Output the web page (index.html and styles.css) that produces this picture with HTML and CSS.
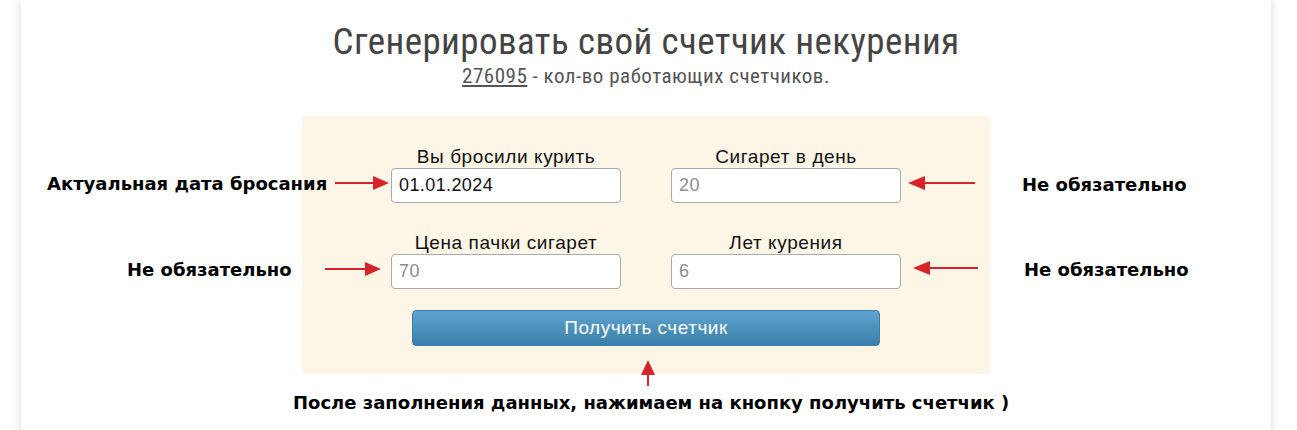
FILE: index.html
```html
<!DOCTYPE html>
<html lang="ru">
<head>
<meta charset="utf-8">
<title>Счетчик некурения</title>
<link rel="stylesheet" href="styles.css">
</head>
<body>
<div class="page">
  <h1 class="title">Сгенерировать свой счетчик некурения</h1>
  <p class="subtitle"><a class="count" href="#">276095</a> - кол-во работающих счетчиков.</p>
  <form class="gen-form">
    <div class="fields">
      <label class="field">
        <span class="field-label">Вы бросили курить</span>
        <input class="field-input" type="text" value="01.01.2024">
      </label>
      <label class="field">
        <span class="field-label">Сигарет в день</span>
        <input class="field-input" type="text" placeholder="20">
      </label>
      <label class="field">
        <span class="field-label">Цена пачки сигарет</span>
        <input class="field-input" type="text" placeholder="70">
      </label>
      <label class="field">
        <span class="field-label">Лет курения</span>
        <input class="field-input" type="text" placeholder="6">
      </label>
    </div>
    <button class="submit" type="button">Получить счетчик</button>
  </form>
</div>

<div class="note note-date">Актуальная дата бросания</div>
<div class="note note-r1">Не обязательно</div>
<div class="note note-l2">Не обязательно</div>
<div class="note note-r2">Не обязательно</div>
<div class="note note-bottom">После заполнения данных, нажимаем на кнопку получить счетчик )</div>

<svg class="arrow arrow-a" width="56" height="16" viewBox="0 0 56 16"><line x1="0" y1="8" x2="42" y2="8" stroke="#d8232a" stroke-width="2"/><polygon points="38,1 54,8 38,15" fill="#d8232a"/></svg>
<svg class="arrow arrow-b" width="58" height="16" viewBox="0 0 58 16"><line x1="0" y1="8" x2="44" y2="8" stroke="#d8232a" stroke-width="2"/><polygon points="40,1 56,8 40,15" fill="#d8232a"/></svg>
<svg class="arrow arrow-c" width="70" height="16" viewBox="0 0 70 16"><line x1="14" y1="8" x2="68" y2="8" stroke="#d8232a" stroke-width="2"/><polygon points="18,1 1,8 18,15" fill="#d8232a"/></svg>
<svg class="arrow arrow-d" width="68" height="16" viewBox="0 0 68 16"><line x1="14" y1="8" x2="66" y2="8" stroke="#d8232a" stroke-width="2"/><polygon points="18,1 1,8 18,15" fill="#d8232a"/></svg>
<svg class="arrow arrow-e" width="16" height="28" viewBox="0 0 16 28"><line x1="8" y1="12" x2="8" y2="27" stroke="#d8232a" stroke-width="2"/><polygon points="1,16 8,1 15,16" fill="#d8232a"/></svg>
</body>
</html>
```

FILE: styles.css
```css
html, body {
  margin: 0;
  padding: 0;
  background: #ffffff;
}

body {
  position: relative;
  height: 430px;
  overflow: hidden;
  font-family: "Liberation Sans", Arial, sans-serif;
}

.page {
  width: 1250px;
  margin-left: 21px;
  min-height: 460px;
  background: #ffffff;
  box-shadow: 0 0 9px rgba(0, 0, 0, 0.16);
  padding-top: 22px;
  box-sizing: border-box;
}

.title {
  margin: 0;
  text-align: center;
  font-family: "Roboto Condensed", "Liberation Sans Narrow", "Arial Narrow", sans-serif;
  font-weight: 400;
  font-size: 37px;
  letter-spacing: 0.4px;
  line-height: 40px;
  color: #444444;
}

.subtitle {
  margin: 2px 0 0;
  text-align: center;
  font-family: "Roboto Condensed", "Liberation Sans Narrow", "Arial Narrow", sans-serif;
  font-size: 21px;
  letter-spacing: 0.5px;
  line-height: 25px;
  color: #555555;
}

.count {
  color: #555555;
  text-decoration: underline;
}

.gen-form {
  width: 688px;
  margin: 27px auto 0;
  background: #fdf5e6;
  border-radius: 3px;
  padding: 30px 0 28px;
  box-sizing: border-box;
  display: flex;
  flex-direction: column;
  align-items: center;
}

.fields {
  display: grid;
  grid-template-columns: 230px 230px;
  column-gap: 50px;
  row-gap: 29px;
}

.field {
  display: flex;
  flex-direction: column;
  align-items: center;
}

.field-label {
  font-size: 19px;
  letter-spacing: 0.6px;
  line-height: 21px;
  color: #111111;
  margin-bottom: 1px;
}

.field-input {
  width: 230px;
  height: 35px;
  box-sizing: border-box;
  border: 1px solid #a9a9a9;
  border-radius: 4px;
  background: #ffffff;
  padding: 0 7px;
  font-family: "Liberation Sans", Arial, sans-serif;
  font-size: 18px;
  letter-spacing: 0.4px;
  color: #111111;
  outline: none;
}

.field-input::placeholder {
  color: #8d8d8d;
  opacity: 1;
}

.submit {
  margin-top: 21px;
  width: 468px;
  height: 36px;
  border: 1px solid #3d7ca6;
  border-radius: 4px;
  background: linear-gradient(#5ea5d0, #3b7eaa);
  color: #ffffff;
  font-family: "Liberation Sans", Arial, sans-serif;
  font-size: 19px;
  letter-spacing: 0.5px;
  cursor: pointer;
}

.note {
  position: absolute;
  font-family: "DejaVu Sans", Verdana, sans-serif;
  font-weight: 700;
  font-size: 18px;
  line-height: 20px;
  color: #000000;
  white-space: nowrap;
}

.note-date { left: 47px; top: 174px; }
.note-r1 { left: 1022px; top: 175px; }
.note-l2 { left: 127px; top: 260px; }
.note-r2 { left: 1024px; top: 260px; }
.note-bottom { left: 293px; top: 393px; }

.arrow {
  position: absolute;
  display: block;
}

.arrow-a { left: 335px; top: 175px; }
.arrow-b { left: 325px; top: 261px; }
.arrow-c { left: 907px; top: 175px; }
.arrow-d { left: 912px; top: 260px; }
.arrow-e { left: 640px; top: 359px; }
```
